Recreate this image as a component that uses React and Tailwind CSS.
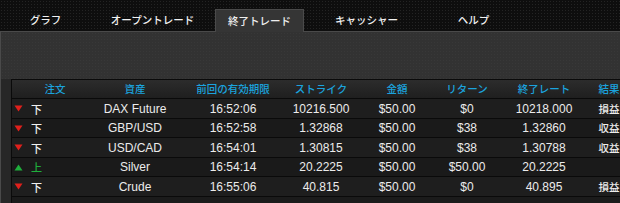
const TABS = ["グラフ", "オープントレード", "終了トレード", "キャッシャー", "ヘルプ"];

const COLS = [
  { label: "注文", w: "w-[83px]", pad: "pl-[3px]" },
  { label: "資産", w: "w-[89px]", pad: "pr-[9px]" },
  { label: "前回の有効期限", w: "w-[93px]", pad: "pl-[5px]" },
  { label: "ストライク", w: "w-[82px]", pad: "pl-[6px]" },
  { label: "金額", w: "w-[73px]", pad: "pl-[3px]" },
  { label: "リターン", w: "w-[73px]", pad: "pr-[3px]" },
  { label: "終了レート", w: "w-[72px]", pad: "pl-[6px]" },
  { label: "結果", w: "w-[64px]", pad: "" },
];

const ROWS = [
  { dir: "down", asset: "DAX Future", time: "16:52:06", strike: "10216.500", amount: "$50.00", ret: "$0", close: "10218.000", result: "損益" },
  { dir: "down", asset: "GBP/USD", time: "16:52:58", strike: "1.32868", amount: "$50.00", ret: "$38", close: "1.32860", result: "収益" },
  { dir: "down", asset: "USD/CAD", time: "16:54:01", strike: "1.30815", amount: "$50.00", ret: "$38", close: "1.30788", result: "収益" },
  { dir: "up", asset: "Silver", time: "16:54:14", strike: "20.2225", amount: "$50.00", ret: "$50.00", close: "20.2225", result: "" },
  { dir: "down", asset: "Crude", time: "16:55:06", strike: "40.815", amount: "$50.00", ret: "$0", close: "40.895", result: "損益" },
];

const JP = { fontFamily: '"Noto Sans CJK JP", sans-serif' };

function Arrow({ dir }) {
  return dir === "up" ? (
    <svg width="9" height="7" viewBox="0 0 9 7" className="shrink-0">
      <path d="M4.5 0.5 L8.5 6.5 L0.5 6.5 Z" fill="#1fae3c" />
    </svg>
  ) : (
    <svg width="9" height="7" viewBox="0 0 9 7" className="shrink-0">
      <path d="M0.5 0.5 L8.5 0.5 L4.5 6.5 Z" fill="#e0201c" />
    </svg>
  );
}

export default function App() {
  return (
    <div
      className="w-[620px] h-[203px] overflow-hidden bg-[#0e0e0e]"
      style={{ fontFamily: '"Liberation Sans", Arial, "Noto Sans CJK JP", sans-serif' }}
    >
      {/* tab bar */}
      <div className="h-[31px] flex items-end gap-[18px] pl-px bg-[radial-gradient(circle,#242424_0.8px,transparent_1px)] bg-[length:3px_3px]">
        {TABS.map((t, i) => (
          <div
            key={t}
            className={
              i === 2
                ? "w-[89px] h-[23px] flex items-center justify-center text-[10.5px] font-medium text-[#eeeeee] bg-[#353535] border border-b-0 border-[#4a4a4a] -mb-px relative z-10"
                : "w-[89px] h-[23px] flex items-center justify-center text-[10.5px] font-medium text-[#f2f2f2]"
            }
            style={JP}
          >
            {t}
          </div>
        ))}
      </div>

      {/* panel */}
      <div className="h-[172px] bg-[#323232] border-l border-t border-[#4a4a4a] pt-[47px] bg-[radial-gradient(circle,#383838_0.6px,transparent_1px)] bg-[length:3px_3px]">
        <div className="h-full bg-[#272727] pl-[10px]">
          <div className="h-full bg-[#1b1b1b] border-l border-t border-[#0a0a0a] overflow-hidden">
            {/* header */}
            <div className="h-[19px] flex w-max bg-gradient-to-b from-[#2c2c2c] to-[#1f1f1f] border-b border-[#0a0a0a]">
              {COLS.map((c) => (
                <div
                  key={c.label}
                  className={`${c.w} ${c.pad} shrink-0 flex items-center justify-center text-[10.5px] font-medium text-[#1ba3de]`}
                  style={JP}
                >
                  {c.label}
                </div>
              ))}
            </div>
            {/* rows */}
            {ROWS.map((r, i) => {
              const cells = [r.asset, r.time, r.strike, r.amount, r.ret, r.close];
              return (
                <div
                  key={i}
                  className={`h-[19.5px] pt-px flex w-max border-b border-[#0a0a0a] text-[12px] text-[#ececec] ${
                    i % 2 === 0 ? "bg-[#1e1e1e]" : "bg-[#1a1a1a]"
                  }`}
                >
                  <div className="w-[83px] shrink-0 flex items-center pl-[2px] gap-[8px]">
                    <Arrow dir={r.dir} />
                    <span
                      className={`text-[11px] font-medium ${r.dir === "up" ? "text-[#1fae3c]" : "text-[#f0f0f0]"}`}
                      style={JP}
                    >
                      {r.dir === "up" ? "上" : "下"}
                    </span>
                  </div>
                  {cells.map((v, j) => (
                    <div
                      key={j}
                      className={`${COLS[j + 1].w} ${COLS[j + 1].pad} shrink-0 flex items-center justify-center`}
                    >
                      {v}
                    </div>
                  ))}
                  <div
                    className="w-[64px] shrink-0 flex items-center justify-center text-[10.5px] font-medium"
                    style={JP}
                  >
                    {r.result}
                  </div>
                </div>
              );
            })}
          </div>
        </div>
      </div>
    </div>
  );
}
